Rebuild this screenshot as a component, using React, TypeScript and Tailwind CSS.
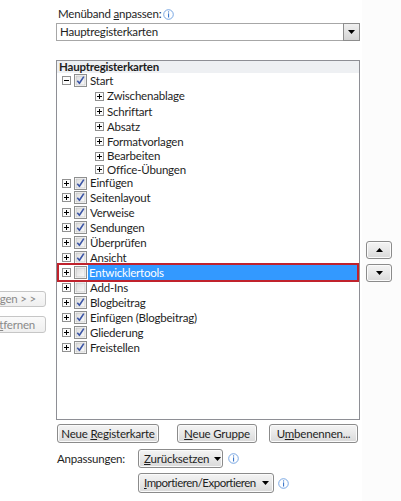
import React from "react";

const FONT = { fontFamily: "Lato, 'Noto Sans', sans-serif" };

function Expander({ open = false }: { open?: boolean }) {
  return (
    <svg width="9" height="9" viewBox="0 0 9 9" className="flex-none">
      <rect x="0.5" y="0.5" width="8" height="8" fill="#fbfbfb" stroke="#919191" />
      <path d="M2 4.5h5" stroke="#000" />
      {!open && <path d="M4.5 2v5" stroke="#000" />}
    </svg>
  );
}

function Check({ checked }: { checked: boolean }) {
  return (
    <svg width="13" height="13" viewBox="0 0 13 13" className="flex-none">
      <defs>
        <linearGradient id="cbg" x1="0" y1="0" x2="1" y2="1">
          <stop offset="0" stopColor="#dcdcdc" />
          <stop offset="1" stopColor="#fbfbfb" />
        </linearGradient>
      </defs>
      <rect x="0.5" y="0.5" width="12" height="12" fill="#fff" stroke="#8e8f8f" />
      <rect x="2" y="2" width="9" height="9" fill="url(#cbg)" stroke="#b8b8b8" strokeWidth="0.6" />
      {checked && (
        <path d="M3.3 6.8 L5.4 9.3 L9.8 2.6" fill="none" stroke="#3b55a6" strokeWidth="1.6" strokeLinejoin="round" />
      )}
    </svg>
  );
}

function Info() {
  return (
    <svg width="11" height="11" viewBox="0 0 11 11" className="flex-none">
      <circle cx="5.5" cy="5.5" r="4.8" fill="#fdfeff" stroke="#6b9ee0" strokeWidth="0.9" />
      <rect x="5" y="2.4" width="1.1" height="1.1" fill="#3d78cc" />
      <rect x="5" y="4.4" width="1.1" height="4.1" fill="#3d78cc" />
    </svg>
  );
}

function DownTri({ up = false }: { up?: boolean }) {
  return (
    <svg width="7" height="4" viewBox="0 0 7 4" className="flex-none">
      {up ? <path d="M0 4 L7 4 L3.5 0 Z" fill="#000" /> : <path d="M0 0 L7 0 L3.5 4 Z" fill="#000" />}
    </svg>
  );
}

const btn =
  "flex items-center justify-center border border-[#8b8b8b] rounded-[3px] bg-linear-to-b from-[#f4f4f4] via-[#e8e8e8] to-[#d9d9d9] shadow-[inset_0_0_0_1px_#fbfbfb] text-[#1e1e1e] leading-none whitespace-nowrap";

type Item = { label: string; checked?: boolean; sub?: boolean; open?: boolean; h: string; selected?: boolean };

const items: Item[] = [
  { label: "Start", checked: true, open: true, h: "h-[15px]" },
  { label: "Zwischenablage", sub: true, h: "h-[16px]" },
  { label: "Schriftart", sub: true, h: "h-[15px]" },
  { label: "Absatz", sub: true, h: "h-[15px]" },
  { label: "Formatvorlagen", sub: true, h: "h-[15px]" },
  { label: "Bearbeiten", sub: true, h: "h-[14px]" },
  { label: "Office-Übungen", sub: true, h: "h-[13px]" },
  { label: "Einfügen", checked: true, h: "h-[14px]" },
  { label: "Seitenlayout", checked: true, h: "h-[15px]" },
  { label: "Verweise", checked: true, h: "h-[15px]" },
  { label: "Sendungen", checked: true, h: "h-[15px]" },
  { label: "Überprüfen", checked: true, h: "h-[15px]" },
  { label: "Ansicht", checked: true, h: "h-[15px]" },
  { label: "Entwicklertools", checked: false, h: "h-[15px]", selected: true },
  { label: "Add-Ins", checked: false, h: "h-[15px]" },
  { label: "Blogbeitrag", checked: true, h: "h-[15px]" },
  { label: "Einfügen (Blogbeitrag)", checked: true, h: "h-[15px]" },
  { label: "Gliederung", checked: true, h: "h-[15px]" },
  { label: "Freistellen", checked: true, h: "h-[15px]" },
];

function Row({ it }: { it: Item }) {
  if (it.selected) {
    return (
      <div className="relative z-10 -my-[2px] h-[19px] border-2 border-[#c0222c] flex items-stretch">
        <div className="flex items-center pl-[3px] gap-[3px] bg-white">
          <Expander />
          <Check checked={false} />
        </div>
        <div className="ml-[1px] flex-1 bg-[#3399ff] flex items-center pl-[1px] text-white leading-none">
          <span>{it.label}</span>
        </div>
      </div>
    );
  }
  if (it.sub) {
    return (
      <div className={`${it.h} flex items-center pl-[38px] gap-[3px] leading-none`}>
        <Expander />
        <span>{it.label}</span>
      </div>
    );
  }
  return (
    <div className={`${it.h} flex items-center pl-[5px] leading-none`}>
      <Expander open={it.open} />
      <span className="ml-[3px]">
        <Check checked={!!it.checked} />
      </span>
      <span className="ml-[3px]">{it.label}</span>
    </div>
  );
}

export default function App() {
  return (
    <div
      className="w-[401px] h-[501px] bg-white flex overflow-hidden text-[11.5px] tracking-[-0.2px] text-[#1e1e1e]"
      style={FONT}
    >
      {/* left partial column */}
      <div className="w-[56px] flex-none flex flex-col items-end pt-[291px] gap-[9px] pr-[10px] overflow-hidden">
        <div className="w-[96px] h-[16px] flex-none flex items-center justify-end pr-[9px] border border-[#c6c6c6] rounded-[3px] bg-linear-to-b from-[#fafafa] to-[#efefef] text-[#8a8a8a] leading-none whitespace-nowrap">
          <span>Hinzufügen &gt; &gt;</span>
        </div>
        <div className="w-[96px] h-[17px] flex-none flex items-center justify-end pr-[10px] border border-[#c6c6c6] rounded-[3px] bg-linear-to-b from-[#fafafa] to-[#efefef] text-[#8a8a8a] leading-none whitespace-nowrap">
          <span>
            &lt; &lt; En<span className="underline">t</span>fernen
          </span>
        </div>
      </div>

      {/* middle column */}
      <div className="w-[306px] flex-none flex flex-col">
        <div className="mt-[7px] h-[14px] flex items-center pl-[2px] leading-none">
          <span>
            Menüband <span className="underline">a</span>npassen:
          </span>
          <span className="ml-[2px]">
            <Info />
          </span>
        </div>
        <div className="mt-[2px] w-[304px] h-[18px] flex border border-[#a7a7a7] bg-white">
          <div className="flex-1 flex items-center pl-[3px] leading-none">
            <span>Hauptregisterkarten</span>
          </div>
          <div className="w-[17px] -my-[1px] -mr-[1px] border border-[#8d8d8d] bg-linear-to-b from-[#f0f0f0] to-[#d4d4d4] flex items-center justify-center">
            <DownTri />
          </div>
        </div>

        <div className="mt-[19px] w-[304px] h-[360px] border border-[#8e8f95] bg-white flex flex-col">
          <div className="h-[12px] bg-[#eef0f3] flex items-center pl-[2px] font-bold leading-none">
            <span>Hauptregisterkarten</span>
          </div>
          {items.map((it, i) => (
            <Row key={i} it={it} />
          ))}
        </div>

        <div className="mt-[4px] h-[19px] flex">
          <div className={`${btn} ml-[1px] w-[102px]`}>
            <span>
              Neue <span className="underline">R</span>egisterkarte
            </span>
          </div>
          <div className={`${btn} ml-[18px] w-[80px]`}>
            <span>
              <span className="underline">N</span>eue Gruppe
            </span>
          </div>
          <div className={`${btn} ml-[12px] w-[89px]`}>
            <span>
              U<span className="underline">m</span>benennen...
            </span>
          </div>
        </div>

        <div className="mt-[6px] h-[19px] flex items-center">
          <span className="ml-[1px] w-[81px] leading-none">Anpassungen:</span>
          <div className={`${btn} h-[19px] w-[85px] justify-start pl-[5px]`}>
            <span>
              <span className="underline">Z</span>urücksetzen
            </span>
            <span className="ml-[5px]">
              <DownTri />
            </span>
          </div>
          <span className="ml-[5px]">
            <Info />
          </span>
        </div>

        <div className="mt-[5px] h-[20px] flex items-center">
          <div className={`${btn} ml-[82px] h-[20px] w-[136px] justify-start pl-[5px]`}>
            <span className="tracking-[-0.5px]">
              <span className="underline">I</span>mportieren/Exportieren
            </span>
            <span className="ml-[6px]">
              <DownTri />
            </span>
          </div>
          <span className="ml-[4px]">
            <Info />
          </span>
        </div>
      </div>

      {/* right column */}
      <div className="flex-1 bg-[#fcfcfc] flex flex-col pt-[241px] pl-[4px] gap-[5px]">
        <div className={`${btn} w-[26px] h-[18px]`}>
          <DownTri up />
        </div>
        <div className={`${btn} w-[26px] h-[18px]`}>
          <DownTri />
        </div>
      </div>
    </div>
  );
}
